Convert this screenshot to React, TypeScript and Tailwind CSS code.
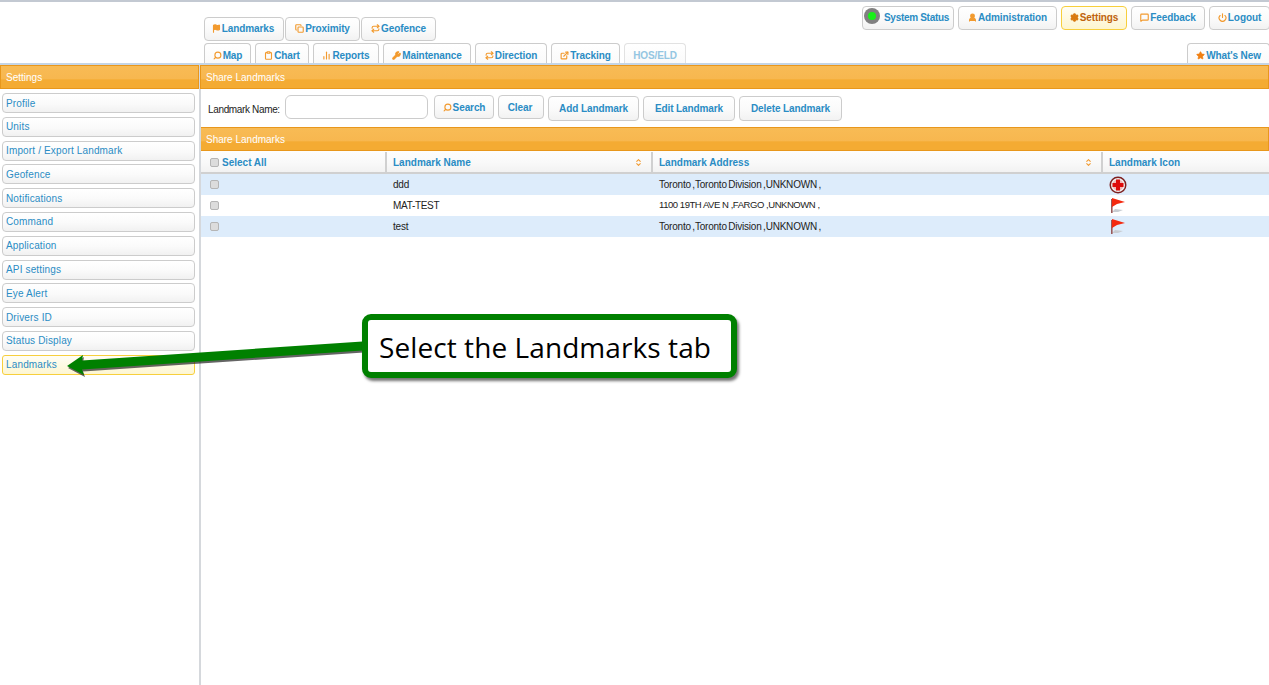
import React from "react";
import { Flag, Copy, Search, Clipboard, BarChart2, Wrench, Repeat, ExternalLink, Power, Star, Settings, MessageSquare, UserRound, ChevronUp, ChevronDown } from "lucide-react";

const orangeBar = "h-6 flex items-center px-[5px] text-white text-[10px] border border-[#e8971c] bg-[linear-gradient(to_bottom,#f8bb55_0%,#f7b74f_60%,#f4ab33_62%,#f4ab33_100%)]";
const btn = "flex items-center justify-center pb-[2px] font-bold text-[10px] tracking-[-0.1px] text-[#2a8cc4] border border-[#cccccc] rounded-[4px] bg-[linear-gradient(to_bottom,#ffffff_0%,#fafafa_55%,#f2f2f2_100%)] whitespace-nowrap";
const tabBtn = "flex items-center justify-center pt-[4px] font-bold text-[10px] tracking-[-0.1px] text-[#2a8cc4] border border-b-0 border-[#cccccc] rounded-t-[4px] bg-[linear-gradient(to_bottom,#ffffff_0%,#fafafa_100%)] whitespace-nowrap";

function Ic({ I, c = "#f29a2e", f = "none", flip = false }: { I: any; c?: string; f?: string; flip?: boolean }) {
  return <I size={9} color={c} fill={f} strokeWidth={3} className={flip ? "shrink-0 mr-[1px] -scale-x-100" : "shrink-0 mr-[1px]"} />;
}

const side = ["Profile", "Units", "Import / Export Landmark", "Geofence", "Notifications", "Command", "Application", "API settings", "Eye Alert", "Drivers ID", "Status Display"];

const rows = [
  { n: "ddd", a: "Toronto ,Toronto Division ,UNKNOWN ,", i: "plus", bg: "bg-[#ddecfb]", nt: "tracking-[-0.2px]", t: "text-[10px] tracking-[-0.22px] [word-spacing:-1px]" },
  { n: "MAT-TEST", a: "1100 19TH AVE N ,FARGO ,UNKNOWN ,", i: "flag", bg: "bg-white", nt: "tracking-[-0.3px]", t: "text-[9.5px] tracking-[-0.45px]" },
  { n: "test", a: "Toronto ,Toronto Division ,UNKNOWN ,", i: "flag", bg: "bg-[#ddecfb]", nt: "tracking-[-0.2px]", t: "text-[10px] tracking-[-0.22px] [word-spacing:-1px]" },
];

function Cb() {
  return <span className="block w-[9px] h-[9px] rounded-[2px] bg-[#dcdcdc] border border-[#b5b5b5]" />;
}

function Sort() {
  return (
    <span className="flex flex-col items-center -space-y-[3px] ml-auto mr-[9px]">
      <ChevronUp size={7} color="#f29a2e" strokeWidth={3.5} />
      <ChevronDown size={7} color="#f29a2e" strokeWidth={3.5} />
    </span>
  );
}

function RedFlag() {
  return (
    <svg width="17" height="17" viewBox="0 0 17 17">
      <path d="M3 15 L9 15 L14 13 L6 12 Z" fill="#c9cdd2" />
      <rect x="2" y="2" width="1.6" height="14" fill="#9a5a5a" />
      <path d="M3 1 L16 5 L8 7 L3 10 Z" fill="#f42a10" />
    </svg>
  );
}

function RedPlus() {
  return (
    <svg width="18" height="18" viewBox="0 0 18 18">
      <circle cx="9" cy="9" r="8.5" fill="#7d2020" />
      <circle cx="9" cy="9" r="7" fill="#f1f1f1" />
      <circle cx="9" cy="9" r="5.6" fill="#f3b5b5" />
      <path d="M7 3.5 H11 V7 H14.5 V11 H11 V14.5 H7 V11 H3.5 V7 H7 Z" fill="#de0a0a" />
    </svg>
  );
}

export default function App() {
  return (
    <div className="relative w-[1269px] h-[685px] overflow-hidden bg-white text-[#222] font-['Liberation_Sans',Arial,sans-serif] border-t-2 border-[#c3c9d2]">
      {/* header */}
      <header className="h-[61px] flex justify-between border-b-[2px] border-[#c5d5e5] box-content">
        <div className="ml-[204px] flex flex-col pt-[15px]">
          <div className="flex h-6">
            <div className={`${btn} w-[80px] mr-px pr-[2px]`}><Ic I={Flag} f="#f29a2e" />Landmarks</div>
            <div className={`${btn} w-[75px] mr-[1px]`}><Ic I={Copy} />Proximity</div>
            <div className={`${btn} w-[75px]`}><Ic I={Repeat} />Geofence</div>
          </div>
          <div className="flex h-5 mt-[2px] gap-[4px]">
            <div className={`${tabBtn} w-[47px]`}><Ic I={Search} flip />Map</div>
            <div className={`${tabBtn} w-[54px]`}><Ic I={Clipboard} />Chart</div>
            <div className={`${tabBtn} w-[66px]`}><Ic I={BarChart2} />Reports</div>
            <div className={`${tabBtn} w-[88px]`}><Ic I={Wrench} f="#f29a2e" />Maintenance</div>
            <div className={`${tabBtn} w-[72px]`}><Ic I={Repeat} />Direction</div>
            <div className={`${tabBtn} w-[69px]`}><Ic I={ExternalLink} />Tracking</div>
            <div className={`${tabBtn} w-[62px] !text-[#94c6e2] !border-[#e2e2e2]`}>HOS/ELD</div>
          </div>
        </div>
        <div className="flex flex-col items-end pt-[4px]">
          <div className="flex h-6 gap-[4px] mr-[-1px]">
            <div className={`${btn} w-[92px] !justify-start pl-[1px] !tracking-[-0.3px]`}>
              <span className="w-4 h-4 rounded-full bg-[#808080] flex items-center justify-center mr-[4px] mt-[-2px]"><span className="w-2 h-2 rounded-full bg-[#19f019]" /></span>
              System Status
            </div>
            <div className={`${btn} w-[99px]`}><Ic I={UserRound} f="#f29a2e" />Administration</div>
            <div className={`${btn} w-[66px] !text-[#c0630c] !border-[#f7cf3c] !bg-[linear-gradient(to_bottom,#fffef5_0%,#fdf5cf_100%)]`}><Ic I={Settings} c="#d97a10" f="#d97a10" />Settings</div>
            <div className={`${btn} w-[74px]`}><Ic I={MessageSquare} />Feedback</div>
            <div className={`${btn} w-[61px]`}><Ic I={Power} />Logout</div>
          </div>
          <div className={`${tabBtn} w-[83px] h-5 mt-[13px] mr-[-1px]`}><Star size={9} fill="#f07f12" color="#f07f12" className="mr-px" />What's New</div>
        </div>
      </header>

      {/* body */}
      <div className="flex h-[620px]">
        <aside className="w-[199px] shrink-0">
          <div className={`${orangeBar} w-[199px]`}>Settings</div>
          <nav className="flex flex-col gap-[3.8px] pl-[2px] pr-[4px] pt-[4px]">
            {side.map((s) => (
              <div key={s} className="h-5 flex items-center pl-[3px] text-[10px] tracking-[0.15px] text-[#2a8cc4] border border-[#cccccc] rounded-[4px] bg-[linear-gradient(to_bottom,#ffffff_0%,#fafafa_55%,#f1f1f1_100%)]">{s}</div>
            ))}
            <div className="h-5 flex items-center pl-[3px] text-[10px] tracking-[0.15px] text-[#2a8cc4] border border-[#f7cf3c] rounded-[3px] bg-[linear-gradient(to_bottom,#fffef5_0%,#fdf6d2_100%)]">Landmarks</div>
          </nav>
        </aside>
        <div className="w-px bg-[#d5d8dc] shrink-0" />
        <main className="relative flex-1 min-w-0">
          <div className="absolute left-0 top-6 bottom-0 w-px bg-[#d5d8dc]" />
          <div className={orangeBar}>Share Landmarks</div>
          <div className="h-[38px] flex items-start pl-2 pt-[6px]">
            <span className="text-[10px] tracking-[-0.35px] whitespace-nowrap mt-[7px] w-[77px] text-[#222]">Landmark Name:</span>
            <div className="w-[143px] h-6 border border-[#cccccc] rounded-[6px] bg-white" />
            <div className={`${btn} !pb-0 w-[60px] h-6 ml-[6px]`}><Ic I={Search} flip />Search</div>
            <div className={`${btn} !pb-0 w-[46px] h-6 ml-[4px] pr-[2px]`}>Clear</div>
            <div className={`${btn} !pb-0 w-[91px] h-[25px] ml-[4px] mt-px`}>Add Landmark</div>
            <div className={`${btn} !pb-0 w-[92px] h-[25px] ml-[4px] mt-px`}>Edit Landmark</div>
            <div className={`${btn} !pb-0 w-[103px] h-[25px] ml-[4px] mt-px`}>Delete Landmark</div>
          </div>
          <div className={orangeBar}>Share Landmarks</div>
          <div className="h-[23px] flex pt-px font-bold text-[10px] text-[#2a8cc4] border-b-2 border-[#d0d0d0] bg-[linear-gradient(to_bottom,#fdfdfd_0%,#f9f9f9_55%,#f2f2f2_100%)]">
            <div className="w-[187px] flex items-center pl-[10px] border-r-2 border-[#d0d0d0]"><Cb /><span className="ml-[3px]">Select All</span></div>
            <div className="w-[266px] flex items-center pl-[6px] border-r-2 border-[#d0d0d0]">Landmark Name<Sort /></div>
            <div className="w-[450px] flex items-center pl-[6px] border-r-2 border-[#d0d0d0]">Landmark Address<Sort /></div>
            <div className="flex-1 flex items-center pl-[6px]">Landmark Icon</div>
          </div>
          {rows.map((r) => (
            <div key={r.n} className={`h-[21px] flex items-center text-[10px] text-[#222] ${r.bg}`}>
              <div className="w-[193px] pl-[10px]"><Cb /></div>
              <div className={`w-[266px] ${r.nt}`}>{r.n}</div>
              <div className={`w-[450px] ${r.t}`}>{r.a}</div>
              <div className="flex-1">{r.i === "plus" ? <RedPlus /> : <RedFlag />}</div>
            </div>
          ))}
        </main>
      </div>

      {/* annotation */}
      <svg className="absolute left-0 top-[-2px] pointer-events-none" width="400" height="400" viewBox="0 0 400 400">
        <path d="M67 366 L83 355 L82 360.5 L370 341 L370 350 L82 369.5 L84 375 Z" fill="#222" opacity="0.7" transform="translate(1 2)" />
        <path d="M67 366 L83 355 L82 360.5 L370 341 L370 350 L82 369.5 L84 375 Z" fill="#008000" />
      </svg>
      <div className="absolute left-[362px] top-[312px] w-[375px] h-[64px] border-[6px] border-[#008000] rounded-[9px] bg-white shadow-[2px_3px_3px_rgba(0,0,0,0.55)] flex items-center pl-[11px] pt-[2px] font-['Open_Sans',sans-serif] text-[28px] tracking-[0.08px] text-black whitespace-nowrap">Select the Landmarks tab</div>
    </div>
  );
}
